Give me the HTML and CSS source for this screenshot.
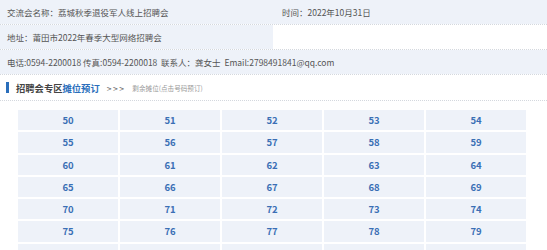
FILE: index.html
```html
<!DOCTYPE html>
<html lang="zh">
<head>
<meta charset="utf-8">
<link rel="stylesheet" href="styles.css">
</head>
<body>
<div class="info">
  <div class="row">
    <div class="cell c1">交流会名称：荔城秋季退役军人线上招聘会</div>
    <div class="cell c2">时间：2022年10月31日</div>
  </div>
  <div class="row">
    <div class="cell c1">地址：莆田市2022年春季大型网络招聘会</div>
    <div class="cell c2 blank"></div>
  </div>
  <div class="row">
    <div class="cell full">电话:0594-2200018 传真:0594-2200018 &nbsp;联系人：龚女士 &nbsp;Email:2798491841@qq.com</div>
  </div>
</div>
<div class="head">
  <span class="bar"></span>
  <span class="title">招聘会专区<em>摊位预订</em></span>
  <span class="arrows">&gt;&gt;&gt;</span>
  <span class="note">剩余摊位(点击号码预订)</span>
</div>
<div class="grid">
  <a>50</a><a>51</a><a>52</a><a>53</a><a>54</a>
  <a>55</a><a>56</a><a>57</a><a>58</a><a>59</a>
  <a>60</a><a>61</a><a>62</a><a>63</a><a>64</a>
  <a>65</a><a>66</a><a>67</a><a>68</a><a>69</a>
  <a>70</a><a>71</a><a>72</a><a>73</a><a>74</a>
  <a>75</a><a>76</a><a>77</a><a>78</a><a>79</a>
  <a></a><a></a><a></a><a></a><a></a>
</div>
</body>
</html>
```
FILE: styles.css
```css
html, body { margin: 0; padding: 0; background: #fff; }
body {
  font-family: "Noto Sans CJK SC", "Microsoft YaHei", sans-serif;
  font-size: 8.5px;
  color: #555;
  width: 547px;
  height: 250px;
  overflow: hidden;
}
.info .row {
  display: flex;
  height: 24px;
  border-bottom: 1px dotted #d4d8de;
}
.cell {
  background: #eef2f9;
  line-height: 24px;
  padding-left: 7px;
  box-sizing: border-box;
  white-space: nowrap;
}
.c1 { width: 273px; }
.c2 { flex: 1; padding-left: 9px; }
.c2.blank { background: #fff; }
.full { flex: 1; }
.head {
  display: flex;
  align-items: center;
  height: 25px;
  border-bottom: 1px dotted #d4d8de;
  padding-left: 6px;
}
.bar {
  width: 3px;
  height: 11px;
  background: #2a6ebb;
  margin-right: 7px;
}
.title {
  font-size: 9.3px;
  font-weight: bold;
  color: #444;
}
.title em { font-style: normal; color: #2a6ebb; }
.arrows {
  margin-left: 7px;
  font-size: 8.5px;
  color: #666;
  letter-spacing: 1.5px;
}
.note {
  margin-left: 7px;
  font-size: 6.6px;
  color: #999;
}
.grid {
  display: grid;
  grid-template-columns: repeat(5, 100px);
  grid-auto-rows: 20.3px;
  gap: 2px;
  margin: 9px 0 0 18px;
}
.grid a {
  background: #eef2f9;
  color: #3a6fb5;
  font-weight: bold;
  font-size: 9.5px;
  text-align: center;
  line-height: 20px;
}
```
